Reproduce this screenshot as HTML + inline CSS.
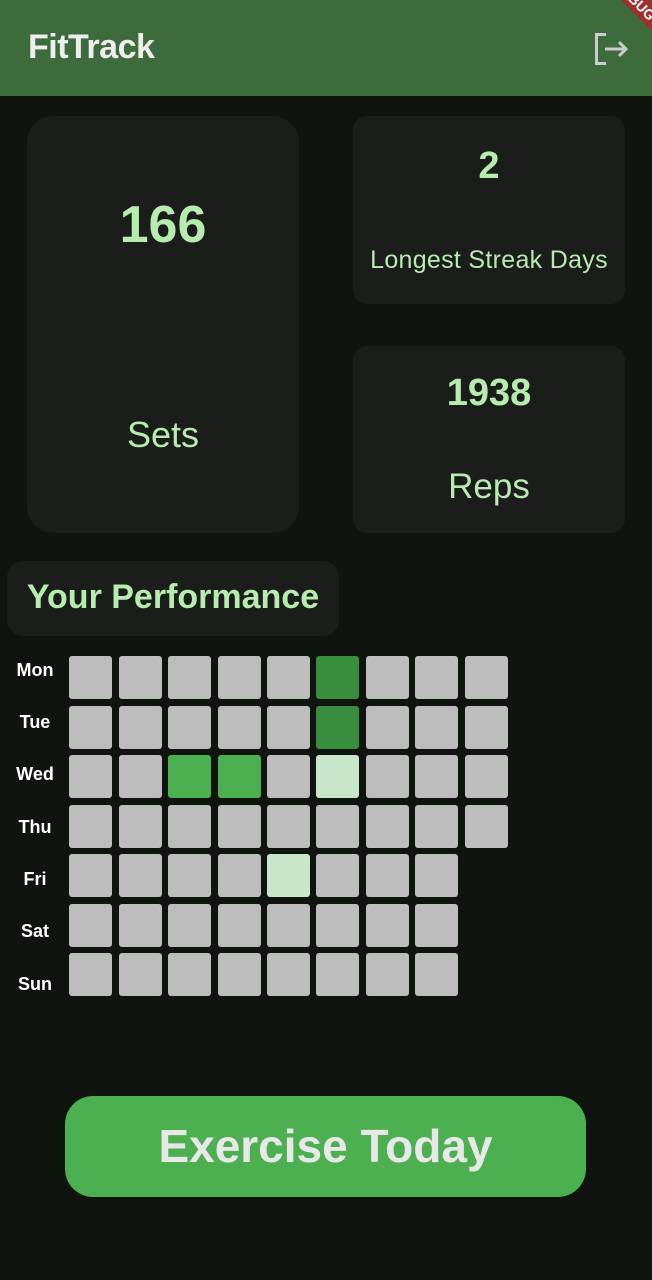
<!DOCTYPE html><html><head><style>
body{margin:0;width:652px;height:1280px;background:#0f140f;font-family:"Liberation Sans",sans-serif;position:relative;overflow:hidden}
.a{position:absolute}
.card{position:absolute;background:#1a1d1a}
.t{position:absolute;text-align:center;color:#b6ecae}
.c{position:absolute;width:43px;height:43px;border-radius:3px;background:#bdbdbd}
.d{position:absolute;width:54px;text-align:center;color:#fff;font-size:18px;font-weight:bold}
</style></head><body>
<div class="a" style="left:0;top:0;width:652px;height:96px;background:#3d6b3b"></div>
<div class="a" style="left:28px;top:28px;font-size:34px;color:#eee;font-weight:bold;letter-spacing:-0.5px">FitTrack</div>
<svg class="a" style="left:594px;top:33px" width="36" height="32" viewBox="0 0 36 32"><path d="M12 1.5H2.5v29H12" fill="none" stroke="#ccc" stroke-width="3"/><path d="M11 16h21M25 9l7 7-7 7" fill="none" stroke="#ccc" stroke-width="3"/></svg>
<div class="a" style="left:575px;top:-10px;width:120px;height:20px;background:#a0302a;transform:rotate(45deg);color:#fff;font-size:14px;font-weight:bold;text-align:center;line-height:20px">DEBUG</div>
<div class="card" style="left:27px;top:116px;width:272px;height:417px;border-radius:26px"></div>
<div class="t" style="left:27px;top:195px;width:272px;font-size:52px;font-weight:bold">166</div>
<div class="t" style="left:27px;top:414px;width:272px;font-size:36px">Sets</div>
<div class="card" style="left:353px;top:116px;width:272px;height:188px;border-radius:14px"></div>
<div class="t" style="left:353px;top:145px;width:272px;font-size:38px;font-weight:bold">2</div>
<div class="t" style="left:353px;top:246px;width:272px;font-size:25px;letter-spacing:0.3px">Longest Streak Days</div>
<div class="card" style="left:353px;top:346px;width:272px;height:187px;border-radius:14px"></div>
<div class="t" style="left:353px;top:372px;width:272px;font-size:38px;font-weight:bold">1938</div>
<div class="t" style="left:353px;top:467px;width:272px;font-size:35px">Reps</div>
<div class="card" style="left:7px;top:561px;width:332px;height:75px;border-radius:16px"></div>
<div class="t" style="left:7px;top:578px;width:332px;font-size:34px;font-weight:bold">Your Performance</div>
<div class="d" style="left:8px;top:660px">Mon</div>
<div class="d" style="left:8px;top:712px">Tue</div>
<div class="d" style="left:8px;top:764px">Wed</div>
<div class="d" style="left:8px;top:817px">Thu</div>
<div class="d" style="left:8px;top:869px">Fri</div>
<div class="d" style="left:8px;top:921px">Sat</div>
<div class="d" style="left:8px;top:974px">Sun</div>
<div id="g"></div>
<script>
var xs=[69,119,168,218,267,316,366,415,465],ys=[656,706,755,805,854,904,953],h='';
var col={'0,5':'#388e3c','1,5':'#388e3c','2,2':'#4caf50','2,3':'#4caf50','2,5':'#c8e6c9','4,4':'#c8e6c9'};
for(var r=0;r<7;r++)for(var c=0;c<(r<4?9:8);c++){h+='<div class="c" style="left:'+xs[c]+'px;top:'+ys[r]+'px'+(col[r+','+c]?';background:'+col[r+','+c]:'')+'"></div>';}
document.getElementById('g').innerHTML=h;
</script>
<div class="a" style="left:65px;top:1096px;width:521px;height:101px;border-radius:28px;background:#4caf50"></div>
<div class="a" style="left:65px;top:1119px;width:521px;text-align:center;font-size:46px;font-weight:bold;color:#e8e8e8">Exercise Today</div>
</body></html>
